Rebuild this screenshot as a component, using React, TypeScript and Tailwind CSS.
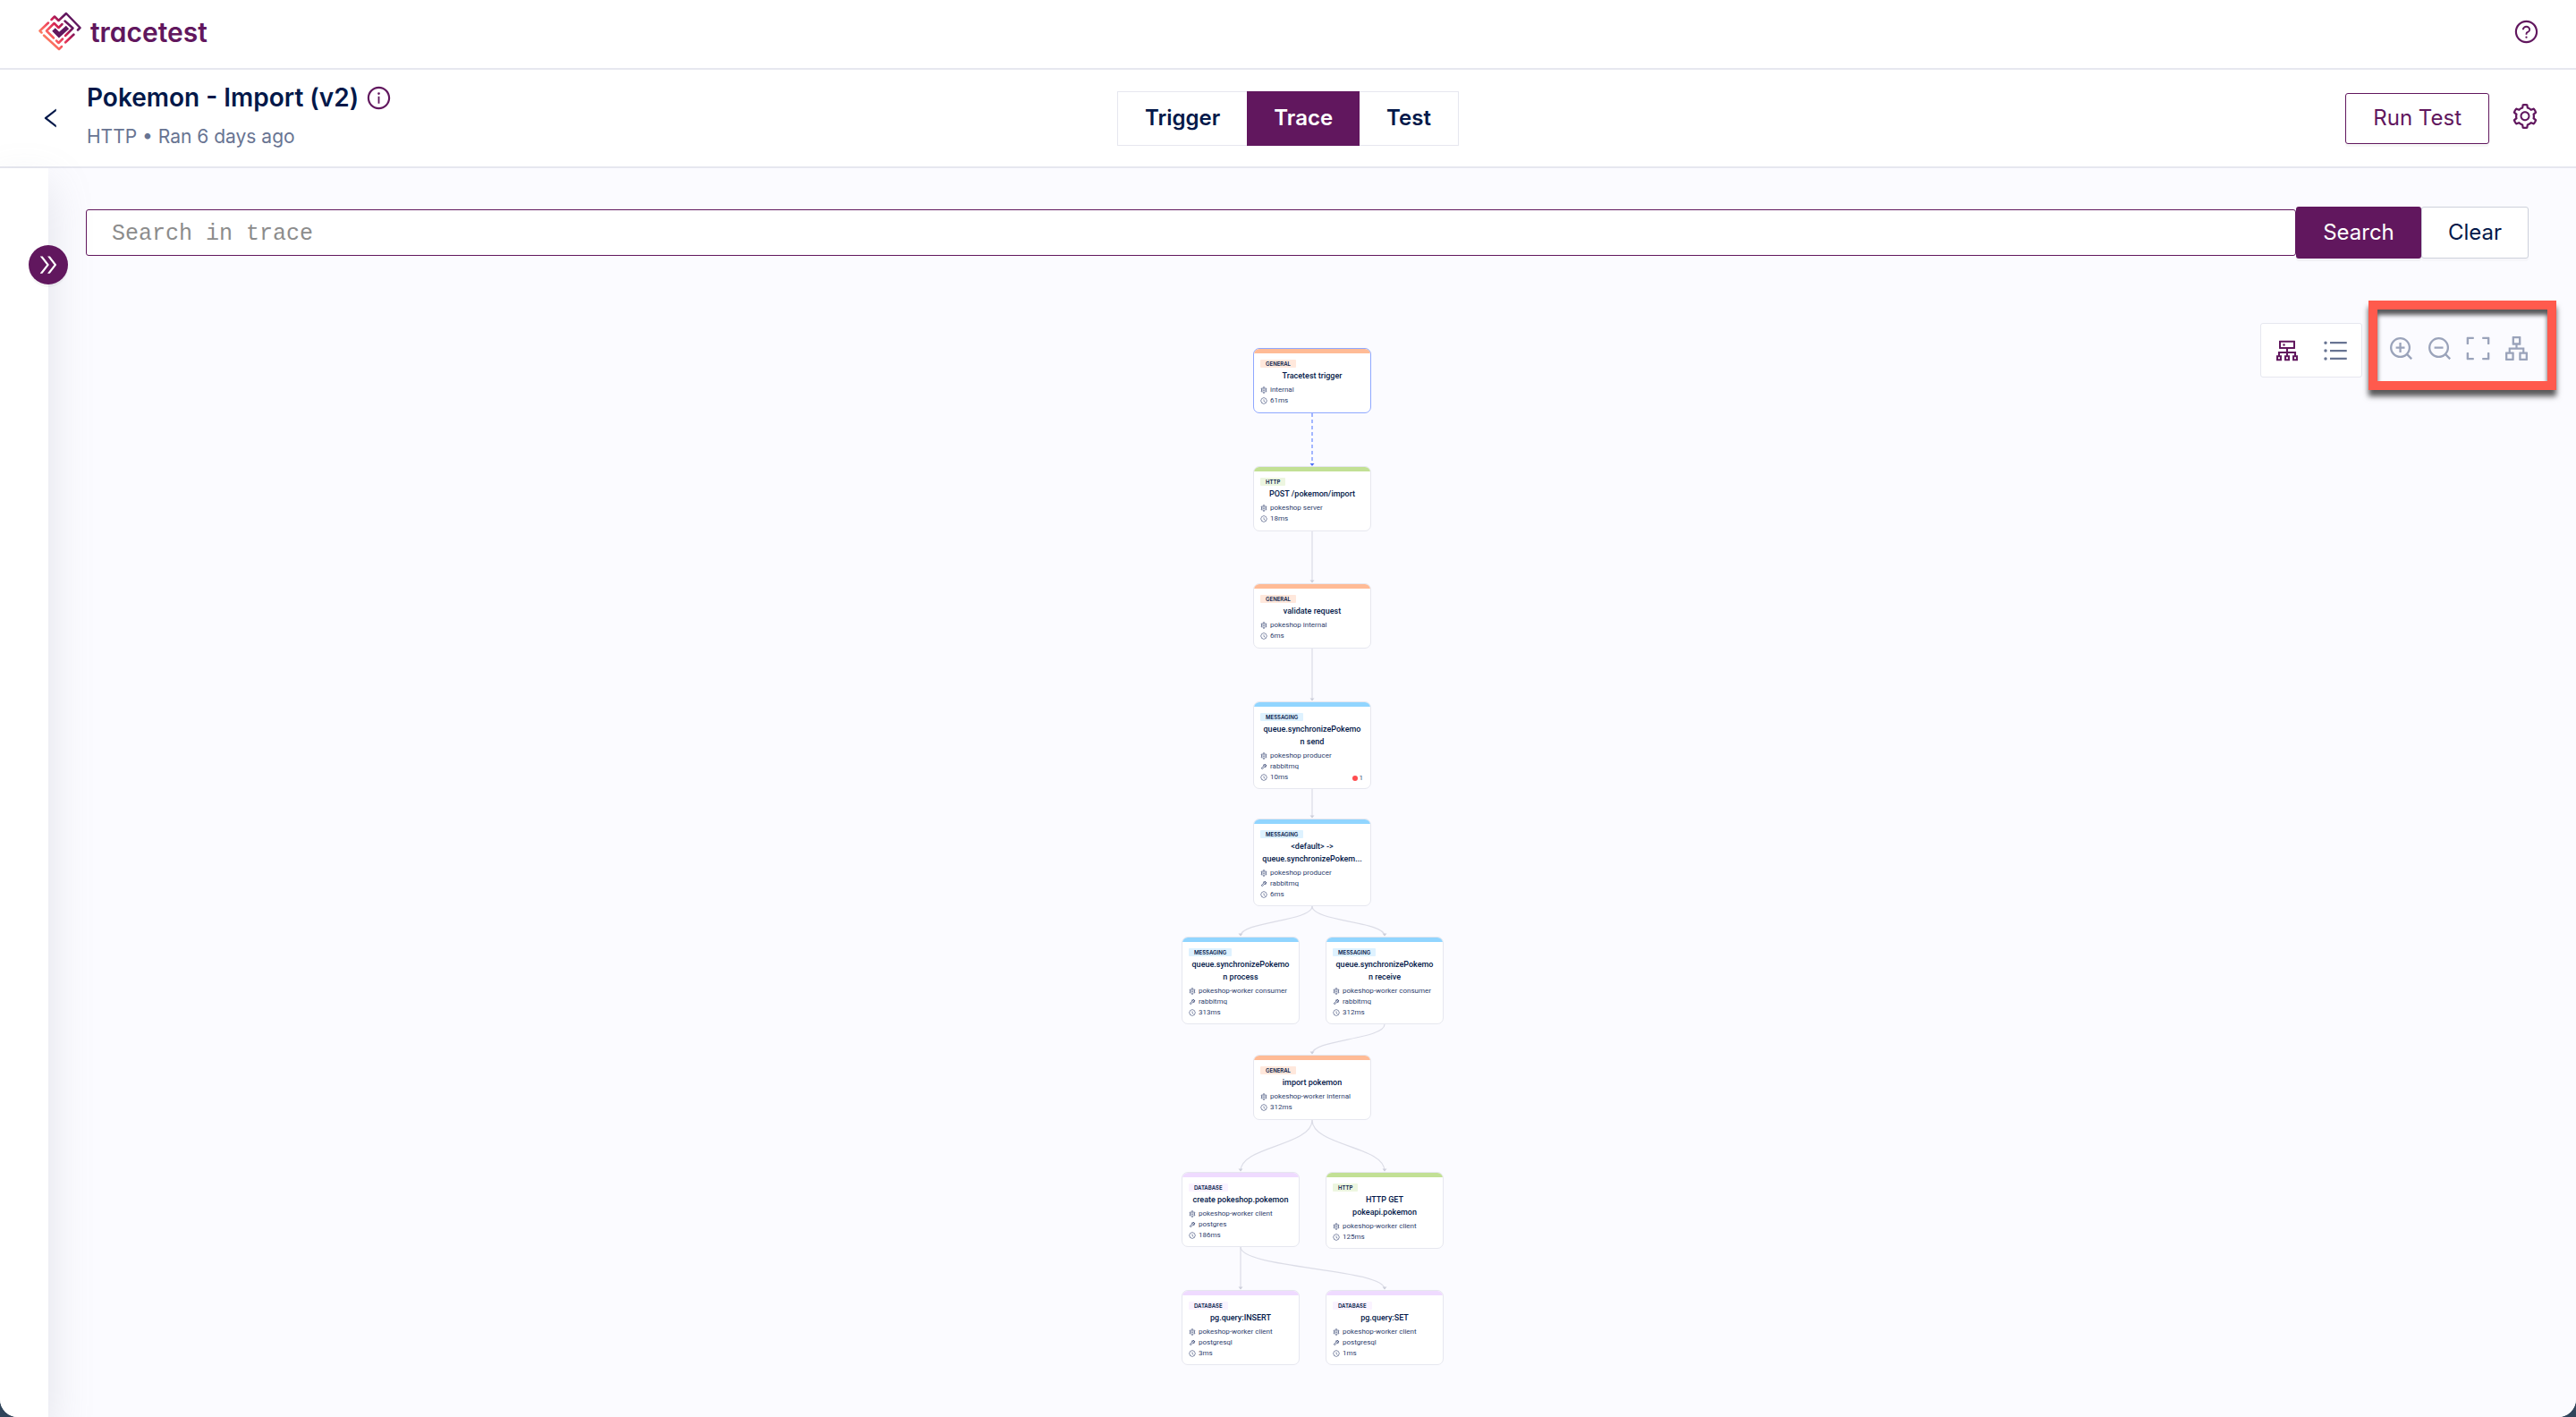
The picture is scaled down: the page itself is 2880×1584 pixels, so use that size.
import React from "react";
import {
  AiOutlineApartment,
  AiOutlineClockCircle,
  AiOutlineCluster,
  AiOutlineDoubleRight,
  AiOutlineExpand,
  AiOutlineInfoCircle,
  AiOutlineLeft,
  AiOutlineQuestionCircle,
  AiOutlineSetting,
  AiOutlineTool,
  AiOutlineUnorderedList,
  AiOutlineZoomIn,
  AiOutlineZoomOut,
} from "react-icons/ai";

type Kind = "general" | "http" | "messaging" | "database";

type SpanNode = {
  id: string;
  kind: Kind;
  title: string[];
  service: string;
  system?: string;
  duration: string;
  place: string;
  selected?: boolean;
  errors?: number;
};

const kinds: Record<Kind, { label: string; band: string; tag: string }> = {
  general: { label: "GENERAL", band: "bg-[#ffbb96]", tag: "bg-[#ffe8dc]" },
  http: { label: "HTTP", band: "bg-[#c2e095]", tag: "bg-[#edf6e0]" },
  messaging: { label: "MESSAGING", band: "bg-[#91d5ff]", tag: "bg-[#def2ff]" },
  database: { label: "DATABASE", band: "bg-[#efdbff]", tag: "bg-[#faf3ff]" },
};

const nodes: SpanNode[] = [
  { id: "trigger", kind: "general", title: ["Tracetest trigger"], service: "internal", duration: "61ms", place: "left-[80px] top-[0px] h-[73px]", selected: true },
  { id: "post", kind: "http", title: ["POST /pokemon/import"], service: "pokeshop server", duration: "18ms", place: "left-[80px] top-[132px] h-[73px]" },
  { id: "validate", kind: "general", title: ["validate request"], service: "pokeshop internal", duration: "6ms", place: "left-[80px] top-[263px] h-[73px]" },
  { id: "send", kind: "messaging", title: ["queue.synchronizePokemo", "n send"], service: "pokeshop producer", system: "rabbitmq", duration: "10ms", place: "left-[80px] top-[395px] h-[98px]", errors: 1 },
  { id: "default", kind: "messaging", title: ["<default> ->", "queue.synchronizePokem..."], service: "pokeshop producer", system: "rabbitmq", duration: "6ms", place: "left-[80px] top-[526px] h-[98px]" },
  { id: "process", kind: "messaging", title: ["queue.synchronizePokemo", "n process"], service: "pokeshop-worker consumer", system: "rabbitmq", duration: "313ms", place: "left-[0px] top-[658px] h-[98px]" },
  { id: "receive", kind: "messaging", title: ["queue.synchronizePokemo", "n receive"], service: "pokeshop-worker consumer", system: "rabbitmq", duration: "312ms", place: "left-[161px] top-[658px] h-[98px]" },
  { id: "import", kind: "general", title: ["import pokemon"], service: "pokeshop-worker internal", duration: "312ms", place: "left-[80px] top-[790px] h-[73px]" },
  { id: "create", kind: "database", title: ["create pokeshop.pokemon"], service: "pokeshop-worker client", system: "postgres", duration: "186ms", place: "left-[0px] top-[921px] h-[84px]" },
  { id: "get", kind: "http", title: ["HTTP GET", "pokeapi.pokemon"], service: "pokeshop-worker client", duration: "125ms", place: "left-[161px] top-[921px] h-[86px]" },
  { id: "insert", kind: "database", title: ["pg.query:INSERT"], service: "pokeshop-worker client", system: "postgresql", duration: "3ms", place: "left-[0px] top-[1053px] h-[84px]" },
  { id: "set", kind: "database", title: ["pg.query:SET"], service: "pokeshop-worker client", system: "postgresql", duration: "1ms", place: "left-[161px] top-[1053px] h-[84px]" },
];

const edges = [
  "M146 205V262",
  "M146 336V394",
  "M146 493V525",
  "M146 624C146 641 66 641 66 657",
  "M146 624C146 641 227 641 227 657",
  "M227 756C227 773 146 773 146 789",
  "M146 863C146 892 66 892 66 920",
  "M146 863C146 892 227 892 227 920",
  "M66 1005V1052",
  "M66 1005C66 1029 227 1029 227 1052",
];

const arrows = [
  [146, 262],
  [146, 394],
  [146, 525],
  [66, 657],
  [227, 657],
  [146, 789],
  [66, 920],
  [227, 920],
  [66, 1052],
  [227, 1052],
];

function Logo() {
  return (
    <svg viewBox="0 0 48 44" className="h-[44px] w-[48px]" fill="none" strokeWidth="2.5" strokeLinecap="round" strokeLinejoin="round" aria-hidden="true">
      <defs>
        <linearGradient id="logo-stroke" x1="4" y1="36" x2="38" y2="8" gradientUnits="userSpaceOnUse">
          <stop offset="0" stopColor="#ff9a62" />
          <stop offset="0.35" stopColor="#f7555f" />
          <stop offset="0.6" stopColor="#d01f52" />
          <stop offset="0.85" stopColor="#61175e" />
        </linearGradient>
      </defs>
      <g stroke="url(#logo-stroke)">
        <path d="M14.500 9 18 5.500 22.500 10 31 2 46.500 18 44 20.500" />
        <path d="M11 12.500 1.500 21.500 3.500 23.500" />
        <path d="M6 26.500 23 42 26 39" />
        <path d="M29.500 10.500 38.500 18.500 30 27" />
        <path d="M26.500 14 22.500 18 17.500 13 9 21.500 17 29.500" />
        <path d="M20 32.500 22.500 35 27 30.500" />
        <path d="M30 34.500 39.500 25.500" />
      </g>
      <path d="M17 20 23 26 32.500 17.500" stroke="#61175e" strokeWidth="5" strokeLinecap="butt" strokeLinejoin="miter" />
    </svg>
  );
}

function SpanCard({ node }: { node: SpanNode }) {
  const kind = kinds[node.kind];
  return (
    <article
      className={`absolute flex w-[132px] flex-col overflow-hidden rounded-[7px] border bg-white ${node.place} ${node.selected ? "border-[#8fa8ff]" : "border-[#e6e7ef]"}`}
    >
      <div className={`h-[5px] shrink-0 ${kind.band}`} />
      <div className="flex flex-col px-[7px] pt-[7px] text-[#031849]">
        <span className={`h-[9px] self-start rounded-[1px] px-[6px] text-[6px] leading-[9px] font-semibold ${kind.tag}`}>{kind.label}</span>
        <h3 className="mt-[2px] mb-[3px] text-center font-['Roboto',sans-serif] text-[9px] leading-[14px] font-medium whitespace-nowrap">
          {node.title.map((line) => (
            <span key={line} className="block">{line}</span>
          ))}
        </h3>
        <Detail icon={<AiOutlineSetting />}>{node.service}</Detail>
        {node.system && <Detail icon={<AiOutlineTool />}>{node.system}</Detail>}
        <Detail icon={<AiOutlineClockCircle />}>{node.duration}</Detail>
      </div>
      {node.errors && (
        <div className="absolute right-[8px] bottom-[6px] flex items-center gap-[2px] font-['Roboto',sans-serif] text-[8px] leading-[10px] text-[#43517c]">
          <span className="size-[6px] rounded-full bg-[#ff4d4f]" />
          {node.errors}
        </div>
      )}
    </article>
  );
}

function Detail({ icon, children }: { icon: React.ReactNode; children: React.ReactNode }) {
  return (
    <p className="flex h-[12px] items-center gap-[3px] font-['Roboto',sans-serif] text-[8px] leading-[12px] whitespace-nowrap text-[#2d3d6c]">
      <span className="text-[8px]">{icon}</span>
      {children}
    </p>
  );
}

function Edges() {
  return (
    <svg viewBox="0 0 294 1140" className="absolute top-0 left-0 h-[1140px] w-[294px]" fill="none" aria-hidden="true">
      {edges.map((d) => (
        <path key={d} d={d} stroke="#dcdde7" strokeWidth="1.200" />
      ))}
      {arrows.map(([x, y]) => (
        <path key={`${x}-${y}`} d={`M${x - 2.5} ${y - 2.5}h5l-2.500 3z`} fill="#cdcfdb" />
      ))}
      <path d="M146 73V129" stroke="#a3b6ff" strokeWidth="2" strokeDasharray="4 3" />
      <path d="M143.500 129h5l-2.500 3z" fill="#4a6cf7" />
    </svg>
  );
}

export default function App() {
  return (
    <div className="min-h-screen bg-[#30445a]">
      <div className="flex min-h-screen flex-col overflow-hidden rounded-b-[20px] bg-white font-['Inter',sans-serif] text-[#031849]">
        <header className="flex h-[78px] items-center justify-between border-b-2 border-[#e6e7ef] pr-[41px] pb-[6px] pl-[43px]">
          <a href="#" className="flex items-center gap-[10px] text-[#61175e]">
            <Logo />
            <span className="pt-[2px] text-[30px] leading-[36px] font-semibold [font-feature-settings:'cv11']">tracetest</span>
          </a>
          <button aria-label="Help" className="text-[29px] text-[#61175e]">
            <AiOutlineQuestionCircle />
          </button>
        </header>

        <div className="grid h-[110px] grid-cols-[1fr_auto_1fr] items-center border-b-2 border-[#e6e7ef]">
          <div className="flex items-center">
            <button aria-label="Back" className="mr-[26px] ml-[43px] text-[28px]">
              <AiOutlineLeft />
            </button>
            <div className="pt-[2px]">
              <div className="flex items-center gap-[8px]">
                <h1 className="text-[28px] leading-[40px] font-semibold">Pokemon - Import (v2)</h1>
                <button aria-label="Test information" className="text-[29px] text-[#61175e]">
                  <AiOutlineInfoCircle />
                </button>
              </div>
              <p className="text-[21px] leading-[48px] text-[#687492]">HTTP • Ran 6 days ago</p>
            </div>
          </div>
          <nav className="flex h-[61px] border border-[#e6e7ef] text-[24px] leading-[32px] font-semibold">
            <button className="px-[30px]">Trigger</button>
            <button className="-my-px bg-[#61175e] px-[30px] text-white">Trace</button>
            <button className="px-[30px]">Test</button>
          </nav>
          <div className="flex items-center justify-end pr-[41px]">
            <button className="h-[57px] rounded-[3px] border border-[#61175e] px-[30px] text-[24px] leading-[32px] text-[#61175e] shadow-[0_3px_0_rgba(0,0,0,0.03)]">Run Test</button>
            <button aria-label="Settings" className="mb-[4px] ml-[24px] text-[32px] text-[#61175e]">
              <AiOutlineSetting />
            </button>
          </div>
        </div>

        <div className="flex flex-1">
          <aside className="relative z-10 w-[54px] shrink-0 bg-white shadow-[0_20px_48px_rgba(153,155,168,0.25)]">
            <button aria-label="Expand panel" className="absolute top-[86px] -right-[22px] flex size-[44px] items-center justify-center rounded-full bg-[#61175e] text-[28px] text-white shadow-[0_3px_0_rgba(0,0,0,0.04)]">
              <AiOutlineDoubleRight />
            </button>
          </aside>

          <main className="flex flex-1 flex-col bg-[#fbfbff]">
            <form className="mt-[43px] mr-[53px] ml-[42px] flex items-center" onSubmit={(e) => e.preventDefault()}>
              <input
                aria-label="Search in trace"
                placeholder="Search in trace"
                className="h-[52px] min-w-0 flex-1 rounded-[3px] border border-[#61175e] bg-white px-[28px] pt-[2px] font-['Courier_New','Liberation_Mono',monospace] text-[25px] outline-none placeholder:text-[#8c8c8c]"
              />
              <button type="submit" className="h-[58px] w-[140px] rounded-[3px] bg-[#61175e] text-[24px] leading-[32px] text-white shadow-[0_3px_0_rgba(0,0,0,0.04)]">Search</button>
              <button type="button" className="h-[58px] w-[120px] rounded-[3px] border border-[#cdd1db] bg-white text-[24px] leading-[32px] shadow-[0_3px_0_rgba(0,0,0,0.02)]">Clear</button>
            </form>

            <section aria-label="Trace graph" className="relative flex-1">
              <div className="absolute top-[47px] right-[22px] flex items-start gap-[7px]">
                <div className="mt-[25px] flex h-[61px] w-[114px] items-center justify-between rounded-[3px] border border-[#e6e7ef] bg-white px-[13px] text-[32px]">
                  <button aria-label="Graph view" className="text-[#61175e]"><AiOutlineCluster /></button>
                  <button aria-label="Timeline view" className="text-[#687492]"><AiOutlineUnorderedList /></button>
                </div>
                <div className="flex h-[100px] w-[210px] items-center gap-[12px] border-[10px] border-[#ff5a4d] pt-[6px] pl-[11px] text-[31px] text-[#9aa3ba] shadow-[0_7px_6px_rgba(0,0,0,0.65),inset_0_6px_5px_rgba(0,0,0,0.65)]">
                  <button aria-label="Zoom in"><AiOutlineZoomIn /></button>
                  <button aria-label="Zoom out"><AiOutlineZoomOut /></button>
                  <button aria-label="Fit view"><AiOutlineExpand /></button>
                  <button aria-label="Mini map"><AiOutlineApartment /></button>
                </div>
              </div>
              <div className="relative mx-auto mt-[100px] h-[1140px] w-[292px]">
                <Edges />
                {nodes.map((node) => (
                  <SpanCard key={node.id} node={node} />
                ))}
              </div>
            </section>
          </main>
        </div>
      </div>
    </div>
  );
}
